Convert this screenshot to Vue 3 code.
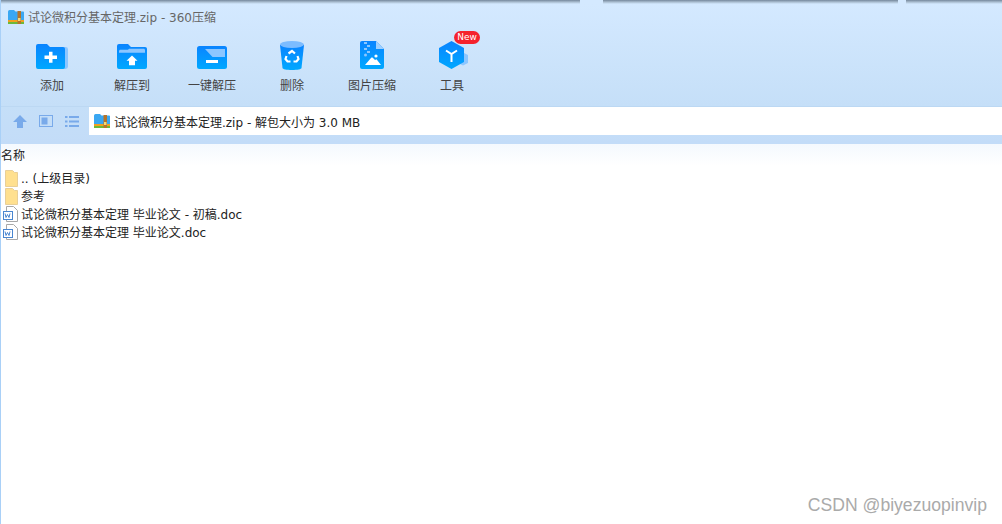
<template>
  <div class="window">
    <header class="head">
      <span class="glare glare-a"></span>
      <span class="glare glare-b"></span>
      <div class="title">
        <svg class="zip-icon" viewBox="0 0 16 14">
          <path d="M0 2C0 .8.7 0 1.600 0H6l1.500 1.600H15c.6 0 1 .4 1 1V11H0z" fill="#3aa7f2" />
          <rect y="10" width="16" height="2" fill="#f0a020" />
          <rect y="12" width="16" height="2" fill="#6cb83a" />
          <rect x="9.500" y="1" width="3.500" height="13" fill="#b5742a" />
          <rect x="10" y="8" width="2.500" height="3" fill="#f7d774" />
        </svg>
        <span>试论微积分基本定理.zip - 360压缩</span>
      </div>

      <nav class="tools">
        <div v-for="tool in tools" :key="tool.label" class="tool">
          <span class="tool-icon">
            <svg v-if="tool.icon === 'add'" viewBox="0 0 32 26" width="32" height="25" preserveAspectRatio="none">
              <path d="M27 3h2.500A2.500 2.500 0 0 1 32 5.500v18a2.500 2.500 0 0 1-2.500 2.500H27z" fill="#8cc6ff" />
              <path d="M2 0h9l3 3h13a2 2 0 0 1 2 2v19a2 2 0 0 1-2 2H2a2 2 0 0 1-2-2V2a2 2 0 0 1 2-2z" fill="url(#blue)" />
              <path d="M13 8h3.500v4H21v3.500h-4.500v4H13v-4H8.500V12H13z" fill="#fff" />
            </svg>
            <svg v-else-if="tool.icon === 'extract'" viewBox="0 0 30 26" width="30" height="25" preserveAspectRatio="none">
              <path d="M2 0h9l3 3h14a2 2 0 0 1 2 2v19a2 2 0 0 1-2 2H2a2 2 0 0 1-2-2V2a2 2 0 0 1 2-2z" fill="url(#blue)" />
              <path d="M2 9V7.500c0-.8.5-1.500 1.500-1.500H11l1-1h14.500c1 0 1.500.7 1.500 1.500V9z" fill="#8cc6ff" />
              <path d="M15 12l5.500 5.500H18V22h-6v-4.500H9.500z" fill="#fff" />
            </svg>
            <svg v-else-if="tool.icon === 'oneclick'" viewBox="0 0 30 23" width="30" height="23">
              <rect width="30" height="23" rx="2.500" fill="url(#blue)" />
              <path d="M8 3h20v8H15.500z" fill="#8cc6ff" />
              <rect x="9" y="14" width="12" height="3" fill="#fff" />
            </svg>
            <svg v-else-if="tool.icon === 'trash'" class="drop" viewBox="0 0 24 29" width="24" height="29">
              <path d="M0 4l2.500 23c.2 1.300 4 2 9.500 2s9.300-.7 9.500-2L24 4z" fill="url(#blue)" />
              <ellipse cx="12" cy="3.500" rx="12" ry="3.500" fill="#7cbcff" />
              <g fill="none" stroke="#fff" stroke-width="2.200">
                <path d="M8.500 12.500L12 10l3 2.500" />
                <path d="M17.500 15l1 3-2 2.500h-3" />
                <path d="M6.500 15l-1 3 2 2.500h3" />
              </g>
            </svg>
            <svg v-else-if="tool.icon === 'image'" viewBox="0 0 24 28" width="24" height="28">
              <path d="M2 0h14l8 8v18a2 2 0 0 1-2 2H2a2 2 0 0 1-2-2V2a2 2 0 0 1 2-2z" fill="url(#blue)" />
              <path d="M16 0l8 8h-8z" fill="#9fd0ff" />
              <path d="M4 1h3v2H4zM7 4h3v2H7zM4 7h3v2H4zM7 10h3v2H7z" fill="#8cc6ff" />
              <circle cx="5.500" cy="14" r="1.500" fill="#8cc6ff" />
              <path d="M5 24l6-7c.6-.6 1.400-.6 2 0l2 2 1.500-.8L21 24z" fill="#fff" />
              <circle cx="16" cy="15" r="1.600" fill="#fff" />
            </svg>
            <svg v-else viewBox="0 0 32 28" width="32" height="28">
              <path d="M24 14l4-2 4 2v8l-5 2.500-3-1.500z" fill="#8cc6ff" />
              <g transform="translate(3 0)">
                <path d="M12.500 0l12.500 7v14l-12.500 7L0 21V7z" fill="url(#blue)" />
                <path d="M7 9.500l5.500 3.500 5.500-3.500M12.500 13v8" fill="none" stroke="#fff" stroke-width="2" />
              </g>
            </svg>
            <span v-if="tool.badge" class="badge">New</span>
          </span>
          <span class="tool-label">{{ tool.label }}</span>
        </div>
      </nav>

      <div class="address">
        <div class="nav-buttons">
          <svg viewBox="0 0 14 13" width="14" height="13">
            <path d="M7 0l7 7h-4v6H4V7H0z" fill="#79aaea" />
          </svg>
          <svg viewBox="0 0 14 12" width="14" height="12">
            <path d="M0 0h14v12H0z M1 1v10h12V1z" fill="#79aaea" />
            <rect x="2.500" y="2.500" width="6" height="7" fill="#79aaea" />
          </svg>
          <svg viewBox="0 0 14 11" width="14" height="11">
            <path d="M0 0h2.500v2H0zM4 0h10v2H4zM0 4.500h2.500v2H0zM4 4.500h10v2H4zM0 9h2.500v2H0zM4 9h10v2H4z" fill="#79aaea" />
          </svg>
        </div>
        <div class="path">
          <svg class="zip-icon" viewBox="0 0 16 14">
            <path d="M0 2C0 .8.7 0 1.600 0H6l1.500 1.600H15c.6 0 1 .4 1 1V11H0z" fill="#3aa7f2" />
            <rect y="10" width="16" height="2" fill="#f0a020" />
            <rect y="12" width="16" height="2" fill="#6cb83a" />
            <rect x="9.500" y="1" width="3.500" height="13" fill="#b5742a" />
            <rect x="10" y="8" width="2.500" height="3" fill="#f7d774" />
          </svg>
          <span>试论微积分基本定理.zip - 解包大小为 3.0 MB</span>
        </div>
      </div>
    </header>

    <section class="list">
      <div class="list-head">名称</div>
      <div v-for="row in rows" :key="row.name" class="row">
        <svg v-if="row.type === 'folder'" class="folder" viewBox="0 0 13 17" width="13" height="17">
          <path d="M.5.500h7l2 2h3v14H.5z" fill="#ffe08f" stroke="#e8cf98" />
        </svg>
        <svg v-else class="doc" viewBox="0 0 15 16" width="15" height="16">
          <path d="M3.500.500h7l4 4v11h-11z" fill="#fff" stroke="#a8a8a8" />
          <rect x=".5" y="5.500" width="9" height="8" fill="#fff" stroke="#4a86d0" />
          <path d="M2 7.500l1 4 1.500-3 1.500 3 1-4" fill="none" stroke="#4a86d0" />
        </svg>
        <span class="row-name">{{ row.name }}</span>
      </div>
    </section>

    <svg class="defs" width="0" height="0">
      <defs>
        <linearGradient id="blue" x1="0" y1="0" x2="0" y2="1">
          <stop offset="0" stop-color="#0a84ff" />
          <stop offset="1" stop-color="#00a8ff" />
        </linearGradient>
      </defs>
    </svg>

    <div class="watermark">CSDN @biyezuopinvip</div>
  </div>
</template>

<script setup>
const tools = [
  { label: '添加', icon: 'add' },
  { label: '解压到', icon: 'extract' },
  { label: '一键解压', icon: 'oneclick' },
  { label: '删除', icon: 'trash' },
  { label: '图片压缩', icon: 'image' },
  { label: '工具', icon: 'tool', badge: true },
]

const rows = [
  { name: '.. (上级目录)', type: 'folder' },
  { name: '参考', type: 'folder' },
  { name: '试论微积分基本定理 毕业论文 - 初稿.doc', type: 'doc' },
  { name: '试论微积分基本定理 毕业论文.doc', type: 'doc' },
]
</script>

<style>
html,
body {
  margin: 0;
  background: #fff;
  overflow: hidden;
}
</style>

<style scoped>
.window {
  position: relative;
  display: flex;
  flex-direction: column;
  width: 1002px;
  height: 524px;
  overflow: hidden;
  box-sizing: border-box;
  border-left: 1px solid #a9d0f7;
  background: #fff;
  color: #222;
  font-family: "DejaVu Sans", "Noto Sans CJK SC", sans-serif;
  font-size: 12px;
}

.head {
  position: relative;
  flex: none;
  height: 144px;
  margin-left: -1px;
  padding-top: 3px;
  box-sizing: border-box;
  background: linear-gradient(180deg, #74879c 0, #a9bccf 2px, #d4e9ff 4px, #c5dff8 106px, #c3dcf8 100%);
}

.glare {
  position: absolute;
  top: 0;
  height: 4px;
  background: #d4e9ff;
}

.glare-a {
  left: 580px;
  width: 23px;
}

.glare-b {
  left: 898px;
  width: 8px;
}

.title {
  display: flex;
  align-items: center;
  gap: 4px;
  height: 27px;
  padding-left: 8px;
  color: #666;
}

.zip-icon {
  width: 16px;
  height: 14px;
  flex: none;
}

.tools {
  display: flex;
  padding-left: 12px;
  height: 68px;
  margin-top: 8px;
}

.tool {
  display: flex;
  flex-direction: column;
  align-items: center;
  width: 80px;
}

.tool-icon {
  position: relative;
  display: flex;
  align-items: flex-end;
  justify-content: center;
  height: 28px;
  margin-top: 3px;
}

.drop {
  margin-bottom: -1px;
}

.tool-label {
  margin-top: 9px;
  line-height: 17px;
  color: #444;
}

.badge {
  position: absolute;
  top: -10px;
  left: 18px;
  width: 26px;
  height: 13px;
  border-radius: 7px;
  background: #f5222d;
  color: #fff;
  font-size: 9px;
  line-height: 13px;
  text-align: center;
}

.address {
  display: flex;
  height: 29px;
  border-top: 1px solid #bcd8f3;
  box-sizing: border-box;
}

.nav-buttons {
  display: flex;
  align-items: center;
  gap: 12px;
  width: 89px;
  flex: none;
  padding-left: 13px;
  box-sizing: border-box;
}

.path {
  display: flex;
  align-items: center;
  gap: 4px;
  flex: 1;
  padding-left: 5px;
  background: #fff;
  color: #222;
}

.list {
  flex: 1;
  background: linear-gradient(180deg, #f4f9fe 0, #fff 22px);
}

.list-head {
  height: 25px;
  line-height: 25px;
}

.row {
  display: flex;
  align-items: center;
  gap: 3px;
  height: 18px;
  line-height: 18px;
}

.row-name {
  margin-top: 2px;
}

.folder {
  margin-left: 4px;
}

.doc {
  margin-left: 2px;
}

.defs {
  position: absolute;
}

.watermark {
  position: absolute;
  right: 15px;
  bottom: 9px;
  color: #aaa;
  font-family: "Liberation Sans", sans-serif;
  font-size: 17.6px;
  line-height: 20px;
}
</style>
